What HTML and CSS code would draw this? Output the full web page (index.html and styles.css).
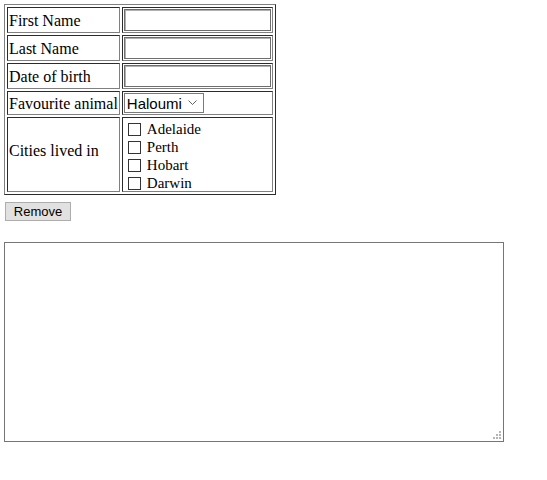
FILE: index.html
```html
<!DOCTYPE html>
<html>
<head>
<meta charset="utf-8">
<link rel="stylesheet" href="styles.css">
</head>
<body>
<table class="form-table">
  <tr><td class="label">First Name</td><td class="value"><input type="text" class="field"></td></tr>
  <tr><td class="label">Last Name</td><td class="value"><input type="text" class="field"></td></tr>
  <tr><td class="label">Date of birth</td><td class="value"><input type="text" class="field"></td></tr>
  <tr><td class="label">Favourite animal</td><td class="value">
    <span class="select-wrap">
      <select class="animal"><option>Haloumi</option></select>
      <svg class="chevron" width="9" height="6" viewBox="0 0 9 6"><path d="M0.5 0.5 L4.5 4.5 L8.5 0.5" fill="none" stroke="#606060" stroke-width="1"/></svg>
    </span>
  </td></tr>
  <tr><td class="label cities-label">Cities lived in</td><td class="value cities">
    <label class="city"><input type="checkbox" class="box"> Adelaide</label>
    <label class="city"><input type="checkbox" class="box"> Perth</label>
    <label class="city"><input type="checkbox" class="box"> Hobart</label>
    <label class="city"><input type="checkbox" class="box"> Darwin</label>
  </td></tr>
</table>
<div class="actions"><button class="remove">Remove</button></div>
<div class="notes-wrap">
  <textarea class="notes"></textarea>
  <svg class="grip" width="9" height="9" viewBox="0 0 9 9">
    <rect x="7" y="1" width="2" height="2" fill="#b4b4b4"/>
    <rect x="4" y="4" width="2" height="2" fill="#b4b4b4"/>
    <rect x="7" y="4" width="2" height="2" fill="#b4b4b4"/>
    <rect x="1" y="7" width="2" height="2" fill="#b4b4b4"/>
    <rect x="4" y="7" width="2" height="2" fill="#b4b4b4"/>
    <rect x="7" y="7" width="2" height="2" fill="#b4b4b4"/>
  </svg>
</div>
</body>
</html>
```

FILE: styles.css
```css
body {
  margin: 4px;
  font-family: "Liberation Serif", serif;
  font-size: 16px;
  color: #000;
}
.form-table {
  border: 1px outset #808080;
  border-spacing: 2px;
}
.form-table td {
  border: 1px inset #808080;
  padding: 1px;
}
.form-table .label {
  padding: 2px 1px 0;
}
.form-table .cities-label {
  padding: 1px 1px 8px;
}
.field {
  box-sizing: border-box;
  width: 147px;
  height: 22px;
  margin: 0;
  display: block;
  border: 1px solid #6e6e6e;
  box-shadow: inset 1px 1px 0 #b0b0b0;
  font-family: "Liberation Sans", sans-serif;
  font-size: 13px;
  background: #fff;
}
.select-wrap {
  position: relative;
  display: inline-block;
  vertical-align: top;
}
.animal {
  appearance: none;
  -webkit-appearance: none;
  box-sizing: border-box;
  width: 80px;
  height: 20px;
  margin: 0;
  padding: 0 0 0 2px;
  display: block;
  border: 1px solid #7a7a7a;
  border-radius: 0;
  background: #fff;
  color: #000;
  font-family: "Liberation Sans", sans-serif;
  font-size: 15px;
}
.chevron {
  position: absolute;
  right: 7px;
  top: 7px;
}
.form-table .cities {
  padding: 1px 1px 0;
}
.city {
  box-sizing: border-box;
  display: flex;
  align-items: center;
  height: 18px;
  padding-top: 2px;
  font-size: 15px;
  line-height: 16px;
}
.box {
  appearance: none;
  -webkit-appearance: none;
  box-sizing: border-box;
  width: 13px;
  height: 13px;
  margin: 0 6px 0 4px;
  border: 1px solid #333;
  border-radius: 0;
  background: #fff;
}
.actions {
  margin: 7px 0 0 1px;
}
.remove {
  box-sizing: border-box;
  width: 66px;
  height: 19px;
  margin: 0;
  padding: 0;
  border: 1px solid #adadad;
  border-radius: 0;
  background: #e1e1e1;
  color: #000;
  font-family: "Liberation Sans", sans-serif;
  font-size: 13px;
}
.notes-wrap {
  position: relative;
  width: 500px;
  height: 200px;
  margin-top: 21px;
}
.notes {
  box-sizing: border-box;
  display: block;
  width: 500px;
  height: 200px;
  margin: 0;
  border: 1px solid #767676;
  border-radius: 0;
  resize: none;
}
.grip {
  position: absolute;
  right: 3px;
  bottom: 3px;
}
```
